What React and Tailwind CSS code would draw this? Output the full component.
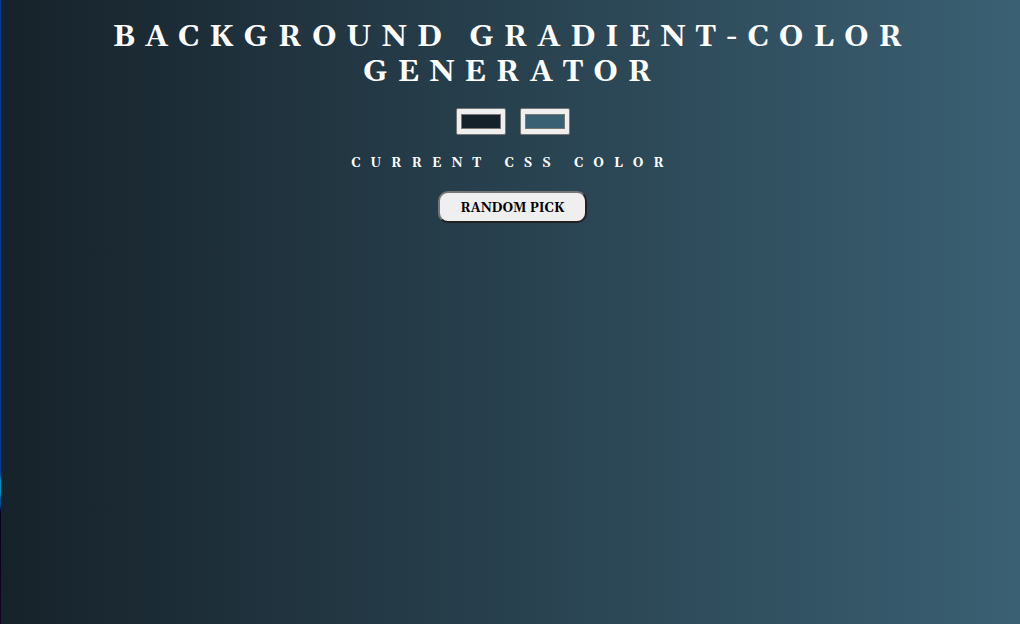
import { useState } from "react";

export default function App() {
  const [left, setLeft] = useState("#16222a");
  const [right, setRight] = useState("#3a6073");
  const randomColor = () =>
    "#" + Math.floor(Math.random() * 0x1000000).toString(16).padStart(6, "0");
  const pick = () => {
    setLeft(randomColor());
    setRight(randomColor());
  };
  const swatch =
    "h-[27px] w-[50px] appearance-auto rounded-[2px] border border-[#767676] bg-[#efefef] px-[2px] py-px";

  return (
    <div className="flex min-h-screen">
      <div
        aria-hidden="true"
        className="w-px bg-[linear-gradient(to_bottom,#003a8c_0%,#003a8c_76%,#0090b8_77%,#0090b8_79%,#004a90_80%,#004a90_81%,#080020_82%,#180020_100%)]"
      />
      <main
        className="flex flex-1 flex-col items-center pt-5 pl-1 text-center font-['Georgia','Gelasio','Liberation_Serif',serif] text-white"
        style={{ backgroundImage: `linear-gradient(to right, ${left}, ${right})` }}
      >
        <h1 className="px-2 text-[30px] leading-[35px] font-bold tracking-[10px] uppercase">
          Background Gradient-Color Generator
        </h1>
        <div className="mt-[18px] flex gap-[14px]">
          <input type="color" aria-label="Left color" className={swatch} value={left} onChange={(e) => setLeft(e.target.value)} />
          <input type="color" aria-label="Right color" className={swatch} value={right} onChange={(e) => setRight(e.target.value)} />
        </div>
        <h2 className="mt-5 text-[13px] leading-4 font-bold tracking-[10px] uppercase">
          Current CSS Color
        </h2>
        <button
          type="button"
          onClick={pick}
          className="mt-5 h-8 rounded-[10px] border-2 border-t-[#767676] border-r-[#212121] border-b-[#212121] border-l-[#767676] bg-[#efefef] px-5 pt-1 text-[13px] font-bold text-black uppercase"
        >
          Random pick
        </button>
      </main>
    </div>
  );
}
